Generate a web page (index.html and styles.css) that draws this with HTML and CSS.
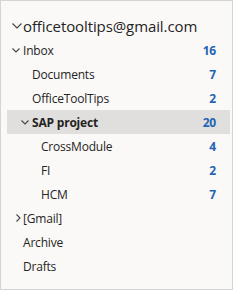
FILE: index.html
```html
<!DOCTYPE html>
<html>
<head>
<meta charset="utf-8">
<link rel="stylesheet" href="styles.css">
</head>
<body>
<div class="pane">
  <div class="account">
    <svg class="chev down big" viewBox="0 0 10 6"><polyline points="0.5,0.5 5,5 9.5,0.5"/></svg>
    <span>officetooltips@gmail.com</span>
  </div>
  <div class="row l0">
    <svg class="chev down" viewBox="0 0 8 5"><polyline points="0.5,0.5 4,4 7.5,0.5"/></svg>
    <span class="name">Inbox</span><span class="count">16</span>
  </div>
  <div class="row l1"><span class="name">Documents</span><span class="count">7</span></div>
  <div class="row l1"><span class="name">OfficeToolTips</span><span class="count">2</span></div>
  <div class="row l1 selected">
    <svg class="chev down" viewBox="0 0 8 5"><polyline points="0.5,0.5 4,4 7.5,0.5"/></svg>
    <span class="name">SAP project</span><span class="count">20</span>
  </div>
  <div class="row l2"><span class="name">CrossModule</span><span class="count">4</span></div>
  <div class="row l2"><span class="name">FI</span><span class="count">2</span></div>
  <div class="row l2"><span class="name">HCM</span><span class="count">7</span></div>
  <div class="row l0">
    <svg class="chev right" viewBox="0 0 5 8"><polyline points="0.5,0.5 4,4 0.5,7.5"/></svg>
    <span class="name">[Gmail]</span>
  </div>
  <div class="row l0"><span class="name">Archive</span></div>
  <div class="row l0"><span class="name">Drafts</span></div>
</div>
</body>
</html>
```
FILE: styles.css
```css
html, body {
  margin: 0;
  padding: 0;
}
body {
  font-family: "Open Sans", "Noto Sans", sans-serif;
  color: #252423;
}
.pane {
  width: 233px;
  height: 290px;
  box-sizing: border-box;
  border: 1px solid #d6d4d2;
  background: #faf9f8;
  padding-top: 12px;
}
.account {
  height: 25px;
  display: flex;
  align-items: center;
  padding-left: 22px;
  position: relative;
  font-size: 15px;
  letter-spacing: -0.1px;
}
.row {
  height: 24px;
  display: flex;
  align-items: center;
  margin: 0 2px 0 6px;
  padding-right: 14px;
  position: relative;
  font-size: 12px;
  letter-spacing: -0.2px;
}
.row.l0 { padding-left: 16px; }
.row.l1 { padding-left: 25px; }
.row.l2 { padding-left: 34px; }
.row .name { flex: 1; }
.row .count {
  font-weight: 700;
  color: #2564b3;
}
.row.selected {
  background: #e1dfdd;
}
.row.selected .name { font-weight: 700; }
.chev {
  position: absolute;
  fill: none;
  stroke: #444;
  stroke-width: 1.1;
}
.chev.down { width: 8px; height: 5px; }
.row .chev.down { left: 5px; top: 10px; }
.row.l1 .chev.down { left: 14px; }
.chev.big { width: 10px; height: 6px; left: 11px; top: 10px; }
.row .chev.right { width: 5px; height: 8px; left: 9px; top: 8px; }
```
